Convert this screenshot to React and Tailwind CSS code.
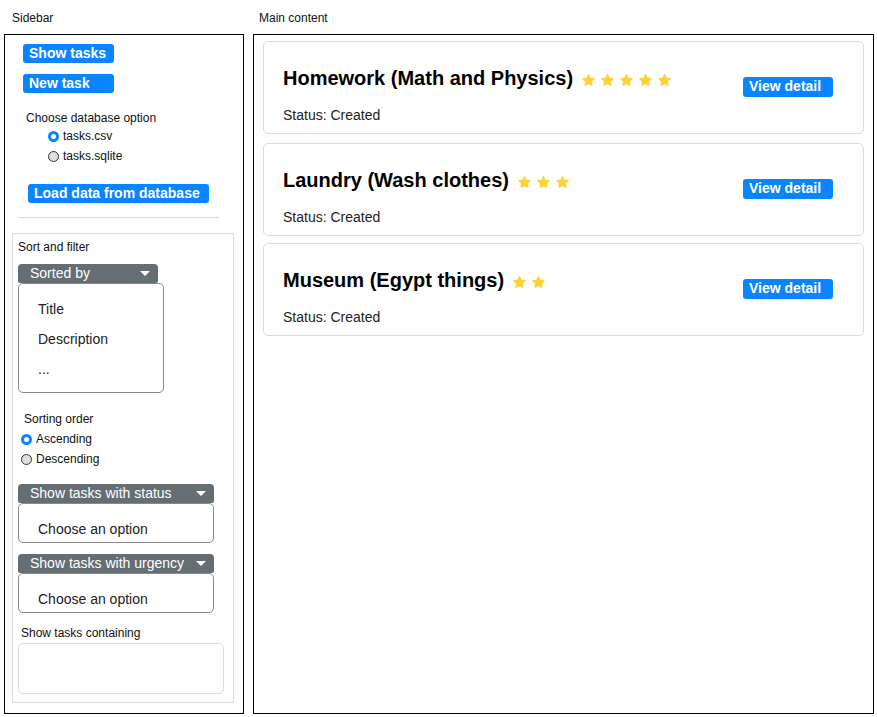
import React from "react";

const font = { fontFamily: '"Liberation Sans", Arial, sans-serif' };

function Radio({ checked }) {
  return checked ? (
    <span className="inline-block w-[11px] h-[11px] rounded-full border-[3px] border-[#0a84ff] bg-white shrink-0" />
  ) : (
    <span className="inline-block w-[11px] h-[11px] rounded-full border border-[#333] bg-[#dedede] shrink-0" />
  );
}

function Star() {
  return (
    <svg width="15" height="15" viewBox="0 0 24 24" className="shrink-0">
      <path
        d="M12 2.8l2.7 5.6 6.1.8-4.5 4.2 1.1 6.1L12 16.6l-5.4 2.9 1.1-6.1-4.5-4.2 6.1-.8z"
        fill="#fdd23a"
        stroke="#fdd23a"
        strokeWidth="2.2"
        strokeLinejoin="round"
      />
    </svg>
  );
}

function BlueButton({ children, className = "" }) {
  return (
    <div
      className={`h-[19px] rounded-[3px] bg-[#0a84ff] text-white font-bold text-[14px] leading-[19px] pl-[6px] whitespace-nowrap ${className}`}
    >
      {children}
    </div>
  );
}

function DropHeader({ label, width }) {
  return (
    <div
      className={`ml-[5px] h-[19px] rounded-t-[4px] rounded-b-[2px] bg-[#646e73] text-white text-[14px] leading-[19px] pl-[12px] pr-[8px] flex items-center justify-between ${width}`}
    >
      <span>{label}</span>
      <svg width="10" height="6" viewBox="0 0 10 6">
        <path d="M0 0h10L5 5z" fill="#fff" />
      </svg>
    </div>
  );
}

function Card({ title, stars, mt }) {
  return (
    <div className={`ml-[9px] w-[601px] h-[93px] border border-[#dcdcdc] rounded-[5px] pl-[19px] pr-[30px] pt-[25px] ${mt}`}>
      <div className="flex items-start justify-between">
        <div className="flex items-center h-[23px]">
          <span className="text-[20px] font-bold leading-[23px] text-black">{title}</span>
          <div className="flex items-center gap-[4px] ml-[8px] mt-[3px]">
            {Array.from({ length: stars }).map((_, i) => (
              <Star key={i} />
            ))}
          </div>
        </div>
        <BlueButton className="w-[90px] h-[20px] mt-[10px] pl-[5px]">View detail</BlueButton>
      </div>
      <div className="mt-[10px] text-[14px] leading-[16px] text-[#222]">Status: Created</div>
    </div>
  );
}

export default function App() {
  return (
    <div className="w-[877px] h-[717px] bg-white text-[#111] relative" style={font}>
      <div className="flex pl-[4px]">
        {/* Sidebar */}
        <div className="flex flex-col">
          <div className="ml-[8px] mt-[11px] h-[23px] text-[12px] leading-[14px]">Sidebar</div>
          <div className="w-[240px] h-[680px] border border-black">
            <BlueButton className="ml-[18px] mt-[9px] w-[91px]">Show tasks</BlueButton>
            <BlueButton className="ml-[18px] mt-[11px] w-[91px] pl-[5px]">New task</BlueButton>
            <div className="ml-[21px] mt-[18px] text-[12px] leading-[14px]">Choose database option</div>
            <div className="ml-[43px] mt-[4px] flex items-center gap-[4px] text-[12px] leading-[14px]">
              <Radio checked />
              <span>tasks.csv</span>
            </div>
            <div className="ml-[43px] mt-[6px] flex items-center gap-[4px] text-[12px] leading-[14px]">
              <Radio />
              <span>tasks.sqlite</span>
            </div>
            <BlueButton className="ml-[23px] mt-[21px] w-[181px] pl-[5px]">Load data from database</BlueButton>
            <div className="ml-[13px] mt-[14px] w-[201px] h-px bg-[#dcdcdc]" />
            <div className="ml-[7px] mt-[15px] w-[222px] h-[470px] border border-[#dcdcdc]">
              <div className="ml-[5px] mt-[6px] text-[12px] leading-[14px]">Sort and filter</div>
              <div className="mt-[10px]">
                <DropHeader label="Sorted by" width="w-[140px]" />
              </div>
              <div className="ml-[5px] w-[146px] h-[110px] border border-[#8a8a8a] rounded-[5px] pl-[19px] pt-[10px] text-[14px] leading-[30px] text-[#222]">
                <div>Title</div>
                <div>Description</div>
                <div>...</div>
              </div>
              <div className="ml-[11px] mt-[19px] text-[12px] leading-[14px]">Sorting order</div>
              <div className="ml-[8px] mt-[6px] flex items-center gap-[4px] text-[12px] leading-[14px]">
                <Radio checked />
                <span>Ascending</span>
              </div>
              <div className="ml-[8px] mt-[6px] flex items-center gap-[4px] text-[12px] leading-[14px]">
                <Radio />
                <span>Descending</span>
              </div>
              <div className="mt-[18px]">
                <DropHeader label="Show tasks with status" width="w-[196px]" />
              </div>
              <div className="ml-[5px] w-[196px] h-[40px] border border-[#8a8a8a] rounded-[5px] pl-[19px] pt-[17px] text-[14px] leading-[16px] text-[#222]">
                Choose an option
              </div>
              <div className="mt-[11px]">
                <DropHeader label="Show tasks with urgency" width="w-[196px]" />
              </div>
              <div className="ml-[5px] w-[196px] h-[40px] border border-[#8a8a8a] rounded-[5px] pl-[19px] pt-[17px] text-[14px] leading-[16px] text-[#222]">
                Choose an option
              </div>
              <div className="ml-[8px] mt-[13px] text-[12px] leading-[14px]">Show tasks containing</div>
              <div className="ml-[5px] mt-[3px] w-[206px] h-[51px] border border-[#dcdcdc] rounded-[5px]" />
            </div>
          </div>
        </div>
        {/* Main */}
        <div className="flex flex-col ml-[9px]">
          <div className="ml-[6px] mt-[11px] h-[23px] text-[12px] leading-[14px]">Main content</div>
          <div className="w-[621px] h-[680px] border border-black">
            <Card title="Homework (Math and Physics)" stars={5} mt="mt-[6px]" />
            <Card title="Laundry (Wash clothes)" stars={3} mt="mt-[9px]" />
            <Card title="Museum (Egypt things)" stars={2} mt="mt-[7px]" />
          </div>
        </div>
      </div>
    </div>
  );
}
